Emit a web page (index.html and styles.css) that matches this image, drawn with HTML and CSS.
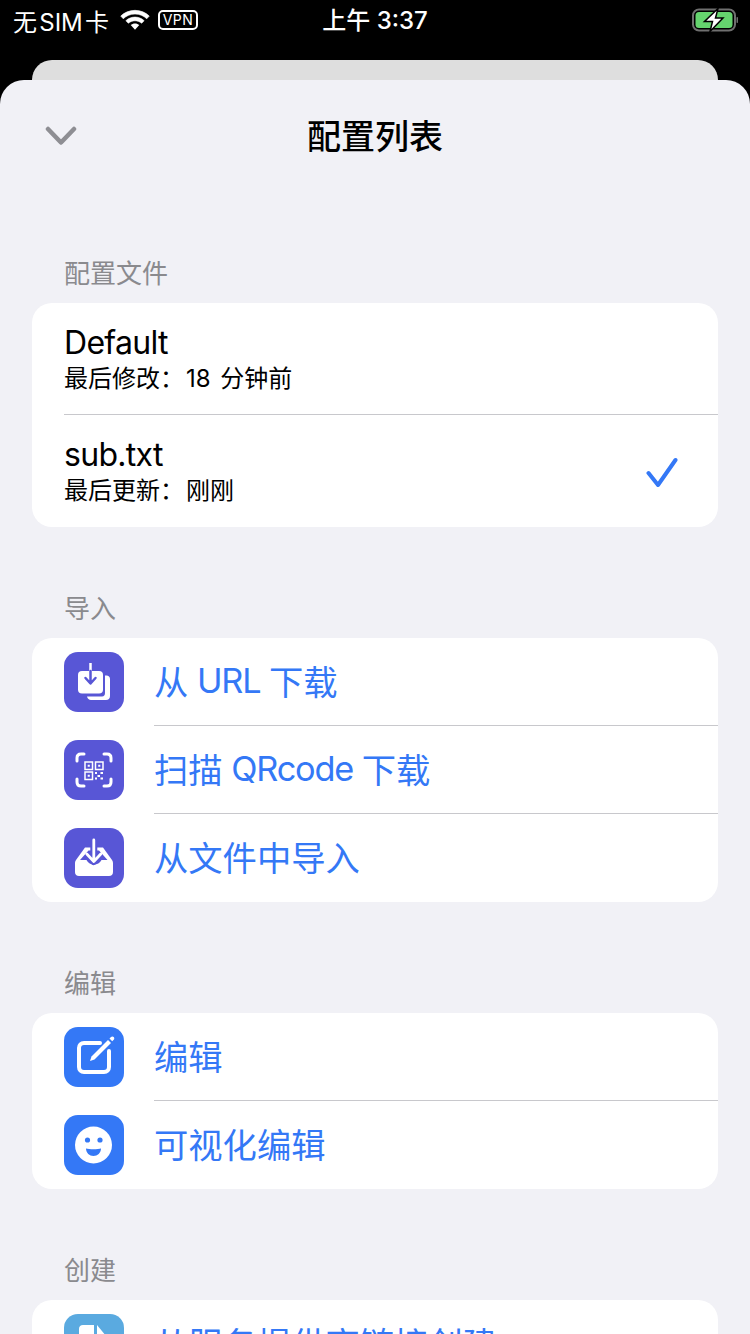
FILE: index.html
```html
<!DOCTYPE html>
<html lang="zh-CN">
<head>
    <meta charset="UTF-8">
    <meta name="viewport" content="width=device-width, initial-scale=1.0">
    <title>配置列表</title>
    <link rel="stylesheet" href="styles.css">
</head>
<body>

<div class="status-bar">
    <div class="status-left">
        <span class="carrier">无 SIM 卡</span>
        <svg class="wifi" width="30" height="22" viewBox="1 2 28 20">
            <path d="M15 3C9.800 3 5.200 5 1.700 8.300L4 10.800C7 8 10.800 6.400 15 6.400S23 8 26 10.800L28.300 8.300C24.800 5 20.200 3 15 3Z" fill="#fff" stroke="#fff" stroke-width="0.6"/>
            <path d="M15 9.300C11.800 9.300 8.800 10.500 6.500 12.600L8.800 15C10.500 13.500 12.600 12.700 15 12.700S19.500 13.500 21.200 15L23.500 12.600C21.200 10.500 18.200 9.300 15 9.300Z" fill="#fff" stroke="#fff" stroke-width="0.6"/>
            <path d="M15 15.200C13.500 15.200 12.100 15.800 11 16.700L15 21L19 16.700C17.900 15.800 16.500 15.200 15 15.200Z" fill="#fff"/>
        </svg>
        <span class="vpn">VPN</span>
    </div>
    <span class="clock">上午 3:37</span>
    <svg class="battery" width="46" height="24" viewBox="0 0 46 24">
        <rect x="1" y="1.500" width="42" height="21" rx="6" fill="none" stroke="#6f6f6f" stroke-width="2"/>
        <rect x="3.500" y="4" width="37" height="16" rx="3.500" fill="#65d46e"/>
        <rect x="44.500" y="9" width="1.500" height="6" rx="0.700" fill="#6f6f6f"/>
        <path d="M26 0.500L12.500 13.500H20.500L18 23.500L31 10H23.500Z" fill="#fff" stroke="#000" stroke-width="1.500"/>
    </svg>
</div>

<div class="sheet-behind"></div>

<div class="sheet">
    <div class="nav">
        <svg class="nav-back" width="32" height="20" viewBox="0 0 32 20">
            <path d="M3 3L16 16.500L29 3" fill="none" stroke="#8e8e93" stroke-width="4.500" stroke-linecap="round" stroke-linejoin="round"/>
        </svg>
        <h1>配置列表</h1>
    </div>

    <h2 class="section-label">配置文件</h2>
    <div class="card">
        <div class="file-row">
            <div>
                <div class="file-name">Default</div>
                <div class="file-meta">最后修改：<span class="meta-value">18 分钟前</span></div>
            </div>
        </div>
        <div class="file-row">
            <div>
                <div class="file-name">sub.txt</div>
                <div class="file-meta">最后更新：<span class="meta-value">刚刚</span></div>
            </div>
            <svg class="check" width="34" height="34" viewBox="0 0 34 34">
                <path d="M4.500 18L14 30L31.500 5" fill="none" stroke="#3478f6" stroke-width="4" stroke-linecap="round" stroke-linejoin="round"/>
            </svg>
        </div>
    </div>

    <h2 class="section-label">导入</h2>
    <div class="card">
        <div class="action-row">
            <svg class="icon" width="60" height="60" viewBox="0 0 60 60">
                <rect width="60" height="60" rx="14" fill="#5856d6"/>
                <path d="M41 23.500H42.500C44.500 23.500 46 25 46 27V44C46 46.500 44.500 48 42 48H27C25 48 23.500 46.500 23 44.500H38C40 44.500 41 43 41 41Z" fill="#fff"/>
                <rect x="14" y="19" width="25" height="22.500" rx="4" fill="#fff"/>
                <path d="M26.500 11V19" stroke="#fff" stroke-width="2.500"/>
                <path d="M26.500 19V31M21.500 26L26.500 31.500L31.500 26" fill="none" stroke="#5856d6" stroke-width="2.500" stroke-linecap="round" stroke-linejoin="round"/>
            </svg>
            <div class="action-label">从 <span class="latin">URL</span> 下载</div>
        </div>
        <div class="action-row">
            <svg class="icon" width="60" height="60" viewBox="0 0 60 60">
                <rect width="60" height="60" rx="14" fill="#5856d6"/>
                <path d="M20 14H17C14.500 14 13 15.500 13 18V21M40 14H43C45.500 14 47 15.500 47 18V21M20 46H17C14.500 46 13 44.500 13 42V39M40 46H43C45.500 46 47 44.500 47 42V39" fill="none" stroke="#fff" stroke-width="3" stroke-linecap="round"/>
                <path d="M21 22H28.500V29.500H21ZM31.500 22H39V29.500H31.500ZM21 32H28.500V39.500H21Z" fill="none" stroke="#fff" stroke-width="1.500"/>
                <path d="M23.700 24.700H25.800V26.800H23.700ZM34.200 24.700H36.300V26.800H34.200ZM23.700 34.700H25.800V36.800H23.700ZM31 32H33V34H31ZM36.500 32H39V34H36.500ZM33.500 35H36V37H33.500ZM31 37.500H33V39.500H31ZM36.500 37.500H39V39.500H36.500Z" fill="#fff"/>
            </svg>
            <div class="action-label">扫描 <span class="latin">QRcode</span> 下载</div>
        </div>
        <div class="action-row">
            <svg class="icon" width="60" height="60" viewBox="0 0 60 60">
                <rect width="60" height="60" rx="14" fill="#5856d6"/>
                <path d="M21 19.500L12 32C11.300 33 11 34 11 35V44C11 46.700 12.500 48 15 48H45C47.500 48 49 46.700 49 44V35C49 34 48.700 33 48 32L39 19.500Z" fill="#fff"/>
                <path d="M16 32L24.500 22.500H35L43.500 32H37.500C36 35 33 36.500 30 36.500S24 35 22.500 32Z" fill="#5856d6"/>
                <path d="M29.800 12V33M22.800 26L29.800 33.500L36.800 26" fill="none" stroke="#5856d6" stroke-width="7" stroke-linejoin="round"/>
                <path d="M29.800 12V33M22.800 26L29.800 33.500L36.800 26" fill="none" stroke="#fff" stroke-width="2.800" stroke-linecap="round" stroke-linejoin="round"/>
            </svg>
            <div class="action-label">从文件中导入</div>
        </div>
    </div>

    <h2 class="section-label">编辑</h2>
    <div class="card">
        <div class="action-row">
            <svg class="icon" width="60" height="60" viewBox="0 0 60 60">
                <rect width="60" height="60" rx="14" fill="#3478f6"/>
                <path d="M36 16H20C17 16 15 18 15 21V40C15 43 17 45 20 45H40C43 45 45 43 45 40V24" fill="none" stroke="#fff" stroke-width="4" stroke-linecap="round"/>
                <path d="M26 34L27.500 29.500L44 13L47 16L30.500 32.500Z" fill="#fff"/>
                <path d="M45.500 11.500L47 10C47.800 9.300 49 9.300 49.700 10C50.500 10.800 50.500 12 49.700 12.800L48.200 14.300Z" fill="#fff"/>
            </svg>
            <div class="action-label">编辑</div>
        </div>
        <div class="action-row">
            <svg class="icon" width="60" height="60" viewBox="0 0 60 60">
                <rect width="60" height="60" rx="14" fill="#3478f6"/>
                <circle cx="29.500" cy="30" r="18.500" fill="#fff"/>
                <circle cx="23.500" cy="25" r="2.600" fill="#3478f6"/>
                <circle cx="36" cy="25" r="2.600" fill="#3478f6"/>
                <path d="M22 33.500C25 34.500 34 34.500 37 33.500C37 38 33.500 41 29.500 41S22 38 22 33.500Z" fill="#3478f6"/>
            </svg>
            <div class="action-label">可视化编辑</div>
        </div>
    </div>

    <h2 class="section-label">创建</h2>
    <div class="card">
        <div class="action-row">
            <svg class="icon" width="60" height="60" viewBox="0 0 60 60">
                <rect width="60" height="60" rx="14" fill="#5aaae0"/>
                <path d="M19 11H30V38H15V15C15 12.500 16.500 11 19 11Z" fill="#fff"/>
                <path d="M33 11L47 28L33 38Z" fill="#fff"/>
            </svg>
            <div class="action-label">从服务提供商链接创建</div>
        </div>
    </div>
</div>

</body>
</html>
```

FILE: styles.css
```css
html, body {
    margin: 0;
    height: 1334px;
    overflow: hidden;
}
body {
    font-family: Inter, "Noto Sans CJK SC", sans-serif;
    background-color: #000;
}
.status-bar {
    position: relative;
    display: flex;
    justify-content: space-between;
    align-items: center;
    height: 40px;
    padding: 0 12px 0 13px;
    margin-bottom: 20px;
    color: #fff;
}
.status-left {
    display: flex;
    align-items: center;
}
.carrier {
    font-size: 24px;
    width: 107px;
    white-space: nowrap;
    word-spacing: -4.5px;
}
.wifi {
    display: block;
}
.vpn {
    box-sizing: border-box;
    width: 40px;
    height: 20px;
    margin-left: 8px;
    border: 2px solid #fff;
    border-radius: 5px;
    font-size: 14px;
    line-height: 16px;
    text-align: center;
    letter-spacing: 0.5px;
}
/* centered over the bar no matter how wide the sides are */
.clock {
    position: absolute;
    left: 0;
    right: 0;
    top: 5px;
    text-align: center;
    font-size: 24px;
    line-height: 32px;
    font-weight: 500;
}
.sheet-behind {
    height: 20px;
    margin: 0 32px;
    background-color: #dedede;
    border-radius: 20px 20px 0 0;
}
.sheet {
    height: 1254px;
    background-color: #f1f1f6;
    border-radius: 24px 24px 0 0;
    padding: 0 32px;
    overflow: hidden;
    box-sizing: border-box;
}
.nav {
    position: relative;
    height: 112px;
    box-sizing: border-box;
    padding-bottom: 4px;
    display: flex;
    align-items: center;
    justify-content: center;
}
.nav h1 {
    margin: 0;
    font-size: 34px;
    font-weight: 500;
    color: #000;
}
.nav-back {
    position: absolute;
    left: 13px;
    top: 46px;
}
.section-label {
    margin: 0;
    padding: 63px 32px 10px;
    font-size: 26px;
    line-height: 38px;
    font-weight: 400;
    color: #8a8a8e;
}
.card {
    background-color: #fff;
    border-radius: 20px;
    overflow: hidden;
}
.file-row {
    display: flex;
    align-items: center;
    justify-content: space-between;
    height: 111px;
    margin-left: 32px;
    padding: 2px 40px 0 0;
    box-sizing: border-box;
}
.file-row + .file-row {
    height: 113px;
    border-top: 1px solid #c8c8cc;
}
.file-name {
    font-size: 32px;
    line-height: 38px;
    letter-spacing: -0.7px;
    color: #000;
}
.file-meta {
    font-size: 24px;
    line-height: 34px;
    color: #000;
}
.meta-value {
    margin-left: 2px;
    word-spacing: 3px;
}
.check {
    display: block;
}
.action-row {
    display: flex;
    align-items: center;
    height: 88px;
    padding-left: 32px;
}
.icon {
    display: block;
    flex: none;
}
.action-label {
    display: flex;
    align-items: center;
    align-self: stretch;
    flex: 1;
    margin-left: 30px;
    padding-bottom: 4px;
    box-sizing: border-box;
    font-size: 34.3px;
    white-space: pre;
    word-spacing: -1px;
    color: #3478f6;
}
.action-row + .action-row .action-label {
    margin-top: -1px;
    border-top: 1px solid #c8c8cc;
}
.latin {
    letter-spacing: -1.2px;
}
```
